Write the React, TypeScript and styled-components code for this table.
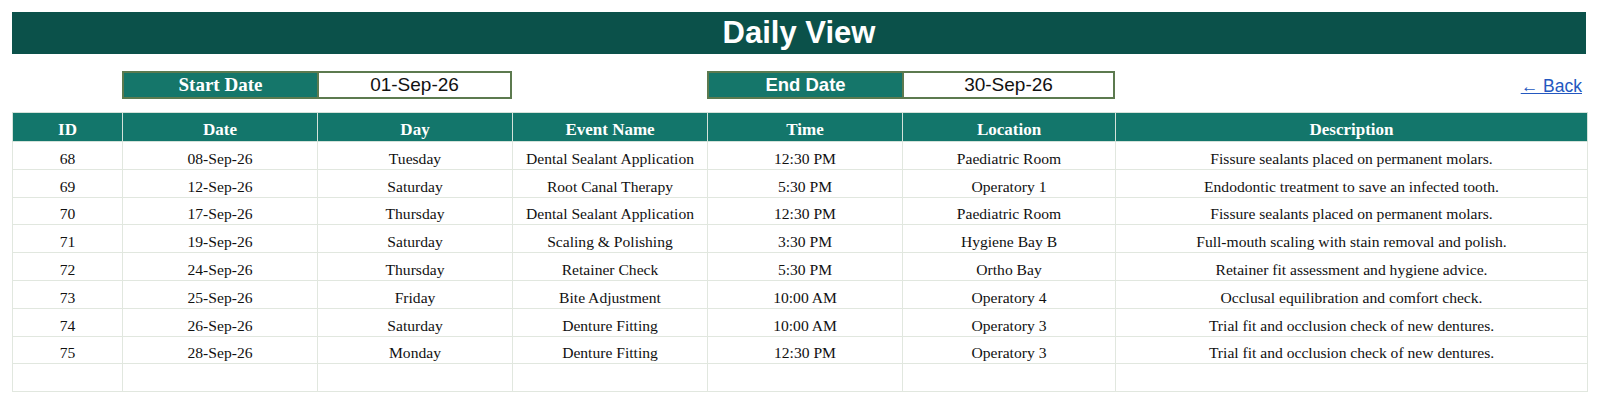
import React from "react";
import styled, { createGlobalStyle } from "styled-components";

const Global = createGlobalStyle`
  html, body { margin: 0; padding: 0; background: #ffffff; }
  body { font-family: "Liberation Serif", "Times New Roman", serif; }
`;

const COLS = "110px 195px 195px 195px 195px 213px 1fr";

const Page = styled.div`
  padding: 12px 14px 12px 12px;
  display: flex;
  flex-direction: column;
`;

const TitleBar = styled.h1`
  margin: 0;
  height: 42px;
  background: #0b514a;
  color: #ffffff;
  font-family: "Liberation Sans", Arial, sans-serif;
  font-weight: 700;
  font-size: 31px;
  display: flex;
  align-items: center;
  justify-content: center;
`;

const FilterRow = styled.div`
  display: grid;
  grid-template-columns: ${COLS};
  margin-top: 17px;
  height: 28px;
  align-items: stretch;
`;

const Label = styled.div<{ $col: number; $serif?: boolean }>`
  grid-column: ${(p) => p.$col};
  background: #15766a;
  color: #ffffff;
  border: 2px solid #5c7a4f;
  border-right: none;
  font-family: ${(p) =>
    p.$serif ? `"Liberation Serif", "Times New Roman", serif` : `"Liberation Sans", Arial, sans-serif`};
  font-weight: 700;
  font-size: ${(p) => (p.$serif ? "19px" : "18.5px")};
  display: flex;
  align-items: center;
  justify-content: center;
`;

const Value = styled.div<{ $col: number }>`
  grid-column: ${(p) => p.$col};
  background: #ffffff;
  color: #111111;
  border: 2px solid #5c7a4f;
  font-family: "Liberation Sans", Arial, sans-serif;
  font-size: 19px;
  display: flex;
  align-items: center;
  justify-content: center;
`;

const BackLink = styled.a`
  grid-column: 7;
  justify-self: end;
  align-self: center;
  margin-right: 4px;
  margin-top: 3px;
  color: #2458c0;
  font-family: "Liberation Sans", Arial, sans-serif;
  font-size: 17.5px;
  text-decoration: underline;
  cursor: pointer;
`;

const Table = styled.table`
  margin-top: 13px;
  width: 100%;
  border-collapse: collapse;
  table-layout: fixed;
`;

const HeadCell = styled.th`
  background: #13766b;
  color: #ffffff;
  font-family: "Liberation Serif", "Times New Roman", serif;
  font-weight: 700;
  font-size: 17px;
  height: 23px;
  padding: 5px 0 0;
  border: 1.5px solid #d4e2da;
  text-align: center;
  vertical-align: middle;
`;

const Cell = styled.td`
  height: 19.8px;
  padding: 7px 0 0;
  font-family: "Liberation Serif", "Times New Roman", serif;
  font-size: 15.6px;
  color: #111111;
  text-align: center;
  vertical-align: middle;
  border: 1.5px solid #e1e7df;
`;

const widths = [110, 195, 195, 195, 195, 213, 472];
const headers = ["ID", "Date", "Day", "Event Name", "Time", "Location", "Description"];

const rows = [
  ["68", "08-Sep-26", "Tuesday", "Dental Sealant Application", "12:30 PM", "Paediatric Room", "Fissure sealants placed on permanent molars."],
  ["69", "12-Sep-26", "Saturday", "Root Canal Therapy", "5:30 PM", "Operatory 1", "Endodontic treatment to save an infected tooth."],
  ["70", "17-Sep-26", "Thursday", "Dental Sealant Application", "12:30 PM", "Paediatric Room", "Fissure sealants placed on permanent molars."],
  ["71", "19-Sep-26", "Saturday", "Scaling & Polishing", "3:30 PM", "Hygiene Bay B", "Full-mouth scaling with stain removal and polish."],
  ["72", "24-Sep-26", "Thursday", "Retainer Check", "5:30 PM", "Ortho Bay", "Retainer fit assessment and hygiene advice."],
  ["73", "25-Sep-26", "Friday", "Bite Adjustment", "10:00 AM", "Operatory 4", "Occlusal equilibration and comfort check."],
  ["74", "26-Sep-26", "Saturday", "Denture Fitting", "10:00 AM", "Operatory 3", "Trial fit and occlusion check of new dentures."],
  ["75", "28-Sep-26", "Monday", "Denture Fitting", "12:30 PM", "Operatory 3", "Trial fit and occlusion check of new dentures."],
  ["", "", "", "", "", "", ""],
];

export default function App() {
  return (
    <>
      <Global />
      <Page>
        <TitleBar>Daily View</TitleBar>
        <FilterRow>
          <Label $col={2} $serif>Start Date</Label>
          <Value $col={3}>01-Sep-26</Value>
          <Label $col={5}>End Date</Label>
          <Value $col={6}>30-Sep-26</Value>
          <BackLink>← Back</BackLink>
        </FilterRow>
        <Table>
          <colgroup>
            {widths.map((w, i) => (
              <col key={i} style={{ width: `${w}px` }} />
            ))}
          </colgroup>
          <thead>
            <tr>
              {headers.map((h) => (
                <HeadCell key={h}>{h}</HeadCell>
              ))}
            </tr>
          </thead>
          <tbody>
            {rows.map((r, i) => (
              <tr key={i}>
                {r.map((c, j) => (
                  <Cell key={j}>{c}</Cell>
                ))}
              </tr>
            ))}
          </tbody>
        </Table>
      </Page>
    </>
  );
}
